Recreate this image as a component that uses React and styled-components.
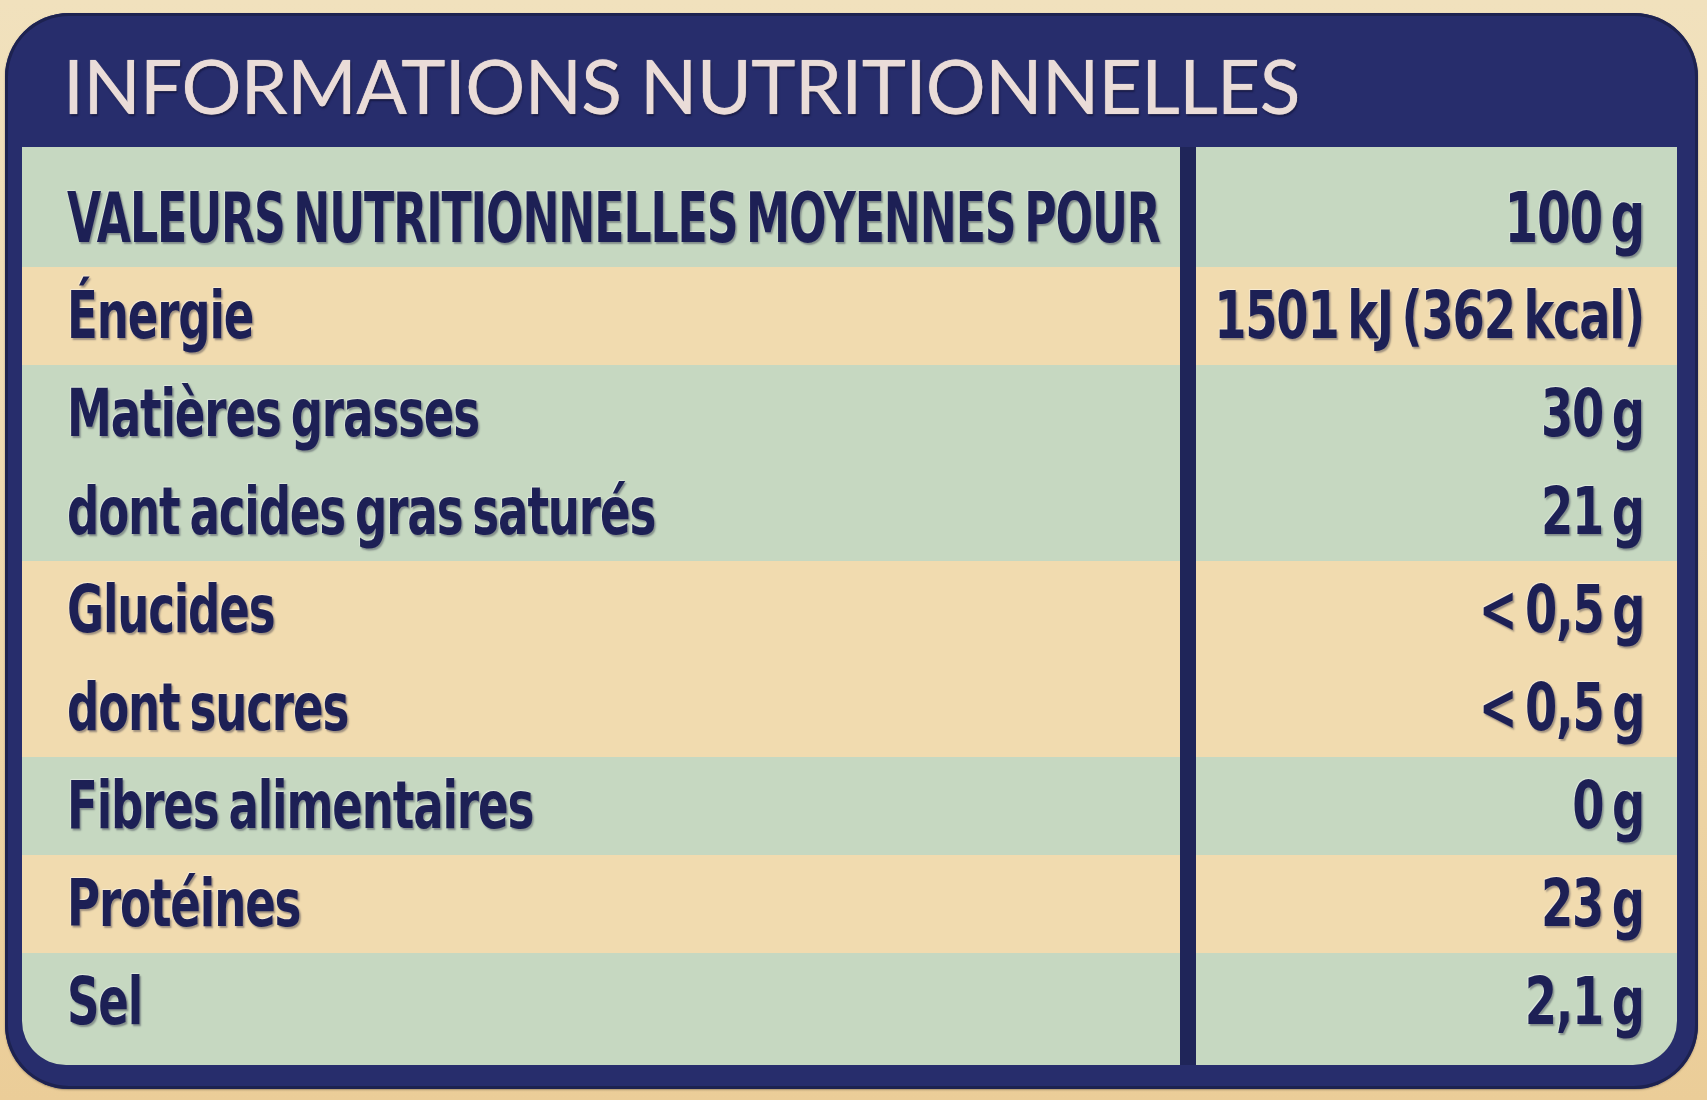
import React from "react";
import styled, { createGlobalStyle } from "styled-components";

const GlobalStyle = createGlobalStyle`
  html, body {
    margin: 0;
    padding: 0;
  }
  body {
    width: 1707px;
    height: 1100px;
    overflow: hidden;
    background: linear-gradient(180deg, #f1e1bd 0%, #efdab0 45%, #ebcd98 100%);
    font-family: "DejaVu Sans Condensed", "DejaVu Sans", sans-serif;
  }
`;

const Card = styled.section`
  box-sizing: border-box;
  width: 1693px;
  margin: 13px 0 0 5px;
  padding: 0 21px 24px 17px;
  background: #272d6c;
  border-radius: 64px;
  box-shadow: inset 0 0 0 3px #1d2250, 0 1px 2px rgba(40, 30, 20, 0.35);
`;

const Title = styled.h1`
  box-sizing: border-box;
  height: 134px;
  margin: 0;
  padding: 35px 0 0 41px;
  font-family: Lato, "Open Sans", sans-serif;
  font-weight: 400;
  font-size: 75px;
  line-height: 75px;
  letter-spacing: -0.6px;
  color: #eadcd8;
  white-space: nowrap;
  text-shadow: 0 0 1px #eadcd8, 1px 2px 2px rgba(10, 10, 40, 0.6);
`;

const Table = styled.div`
  display: flex;
  flex-direction: column;
  background: #1f2559;
  border-radius: 0 0 44px 44px;
  overflow: hidden;
`;

const Row = styled.div`
  display: grid;
  grid-template-columns: 1158px 481px;
  column-gap: 16px;
`;

const Cell = styled.div`
  box-sizing: border-box;
  display: flex;
  align-items: flex-start;
  height: ${(p) => p.$h}px;
  padding-top: ${(p) => p.$pt}px;
  background: ${(p) => (p.$tone === "green" ? "#c6d8c1" : "#f1dbaf")};
  color: #1d2055;
  font-weight: 700;
  font-size: ${(p) => p.$fs}px;
  line-height: 98px;
  white-space: nowrap;
  text-shadow: -1px -1px 1px rgba(255, 255, 255, 0.45), 2px 2px 2px rgba(10, 10, 40, 0.35);
`;

const Label = styled(Cell)`
  justify-content: flex-start;
  padding-left: 45px;
`;

const Value = styled(Cell)`
  justify-content: flex-end;
  padding-right: 33px;
`;

const Text = styled.span`
  flex: none;
  display: inline-block;
  letter-spacing: ${(p) => p.$ls}px;
  word-spacing: ${(p) => p.$ws}px;
  transform: scaleX(${(p) => p.$sx});
  transform-origin: ${(p) => (p.$right ? "right" : "left")} center;
`;

const rows = [
  { label: "Énergie", value: "1501 kJ (362 kcal)", tone: "cream" },
  { label: "Matières grasses", value: "30 g", tone: "green" },
  { label: "dont acides gras saturés", value: "21 g", tone: "green" },
  { label: "Glucides", value: "< 0,5 g", tone: "cream" },
  { label: "dont sucres", value: "< 0,5 g", tone: "cream" },
  { label: "Fibres alimentaires", value: "0 g", tone: "green" },
  { label: "Protéines", value: "23 g", tone: "cream" },
  { label: "Sel", value: "2,1 g", tone: "green" },
];

export default function App() {
  return (
    <>
      <GlobalStyle />
      <Card>
        <Title>INFORMATIONS NUTRITIONNELLES</Title>
        <Table>
          <Row>
            <Label $tone="green" $h={120} $pt={22} $fs={69}>
              <Text $sx={0.712} $ls={-1.5} $ws={-8}>
                VALEURS NUTRITIONNELLES MOYENNES POUR
              </Text>
            </Label>
            <Value $tone="green" $h={120} $pt={22} $fs={69}>
              <Text $right $sx={0.78} $ls={-1.5} $ws={-9}>
                100 g
              </Text>
            </Value>
          </Row>
          {rows.map((r, i) => {
            const h = i === rows.length - 1 ? 112 : 98;
            return (
              <Row key={r.label}>
                <Label $tone={r.tone} $h={h} $pt={0} $fs={66}>
                  <Text $sx={0.76} $ls={-1.5} $ws={-6}>
                    {r.label}
                  </Text>
                </Label>
                <Value $tone={r.tone} $h={h} $pt={0} $fs={66}>
                  <Text $right $sx={0.78} $ls={-1.5} $ws={-8}>
                    {r.value}
                  </Text>
                </Value>
              </Row>
            );
          })}
        </Table>
      </Card>
    </>
  );
}
